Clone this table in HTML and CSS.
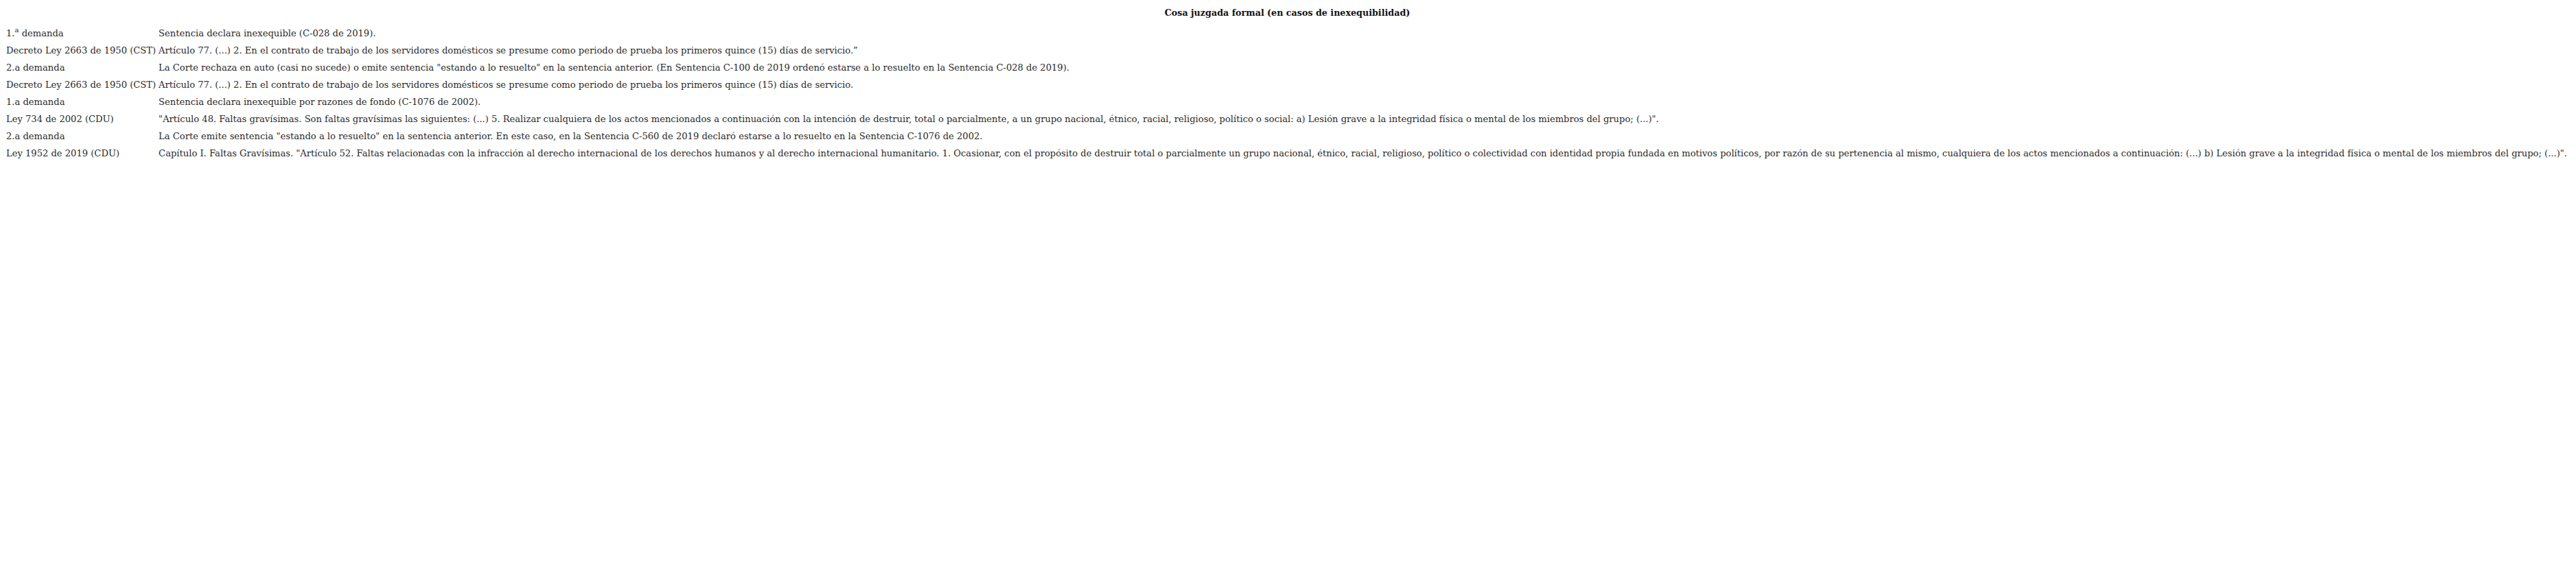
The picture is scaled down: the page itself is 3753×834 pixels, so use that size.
FILE: index.html
```html
<!DOCTYPE html>
<html lang="es">
<head>
<meta charset="utf-8">
<title>Cosa juzgada formal</title>
<link rel="stylesheet" href="styles.css">
</head>
<body>
<table class="cj-table">
  <thead>
    <tr><th class="cj-title" colspan="2">Cosa juzgada formal (en casos de inexequibilidad)</th></tr>
  </thead>
  <tbody>
    <tr><td class="cj-label">1.<sup class="cj-sup">a</sup> demanda</td><td class="cj-text">Sentencia declara inexequible (C-028 de 2019).</td></tr>
    <tr><td class="cj-label">Decreto Ley 2663 de 1950 (CST)</td><td class="cj-text">Artículo 77. (...) 2. En el contrato de trabajo de los servidores domésticos se presume como periodo de prueba los primeros quince (15) días de servicio.”</td></tr>
    <tr><td class="cj-label">2.a demanda</td><td class="cj-text">La Corte rechaza en auto (casi no sucede) o emite sentencia "estando a lo resuelto" en la sentencia anterior. (En Sentencia C-100 de 2019 ordenó estarse a lo resuelto en la Sentencia C-028 de 2019).</td></tr>
    <tr><td class="cj-label">Decreto Ley 2663 de 1950 (CST)</td><td class="cj-text">Artículo 77. (...) 2. En el contrato de trabajo de los servidores domésticos se presume como periodo de prueba los primeros quince (15) días de servicio.</td></tr>
    <tr><td class="cj-label">1.a demanda</td><td class="cj-text">Sentencia declara inexequible por razones de fondo (C-1076 de 2002).</td></tr>
    <tr><td class="cj-label">Ley 734 de 2002 (CDU)</td><td class="cj-text">"Artículo 48. Faltas gravísimas. Son faltas gravísimas las siguientes: (...) 5. Realizar cualquiera de los actos mencionados a continuación con la intención de destruir, total o parcialmente, a un grupo nacional, étnico, racial, religioso, político o social: a) Lesión grave a la integridad física o mental de los miembros del grupo; (...)".</td></tr>
    <tr><td class="cj-label">2.a demanda</td><td class="cj-text">La Corte emite sentencia "estando a lo resuelto" en la sentencia anterior. En este caso, en la Sentencia C-560 de 2019 declaró estarse a lo resuelto en la Sentencia C-1076 de 2002.</td></tr>
    <tr><td class="cj-label">Ley 1952 de 2019 (CDU)</td><td class="cj-text">Capítulo I. Faltas Gravísimas. "Artículo 52. Faltas relacionadas con la infracción al derecho internacional de los derechos humanos y al derecho internacional humanitario. 1. Ocasionar, con el propósito de destruir total o parcialmente un grupo nacional, étnico, racial, religioso, político o colectividad con identidad propia fundada en motivos políticos, por razón de su pertenencia al mismo, cualquiera de los actos mencionados a continuación: (...) b) Lesión grave a la integridad física o mental de los miembros del grupo; (...)".</td></tr>
  </tbody>
</table>
</body>
</html>
```
FILE: styles.css
```css
html, body {
  background: #ffffff;
}
body {
  margin: 8px;
  font-family: "DejaVu Serif", "Liberation Serif", serif;
  font-size: 13.1px;
  color: #2a2a2a;
}
.cj-table {
  border-collapse: collapse;
  border-spacing: 0;
}
.cj-title {
  font-weight: bold;
  font-size: 12.7px;
  text-align: center;
  padding: 2px 0 9px 0;
  line-height: 17px;
  color: #111111;
}
.cj-table td {
  padding: 4px 3px 4px 1px;
  line-height: 17px;
  white-space: nowrap;
  vertical-align: top;
  text-align: left;
}
.cj-label {
  padding-right: 6px;
}
.cj-sup {
  font-size: 10px;
  line-height: 0;
  vertical-align: 6px;
}
```
